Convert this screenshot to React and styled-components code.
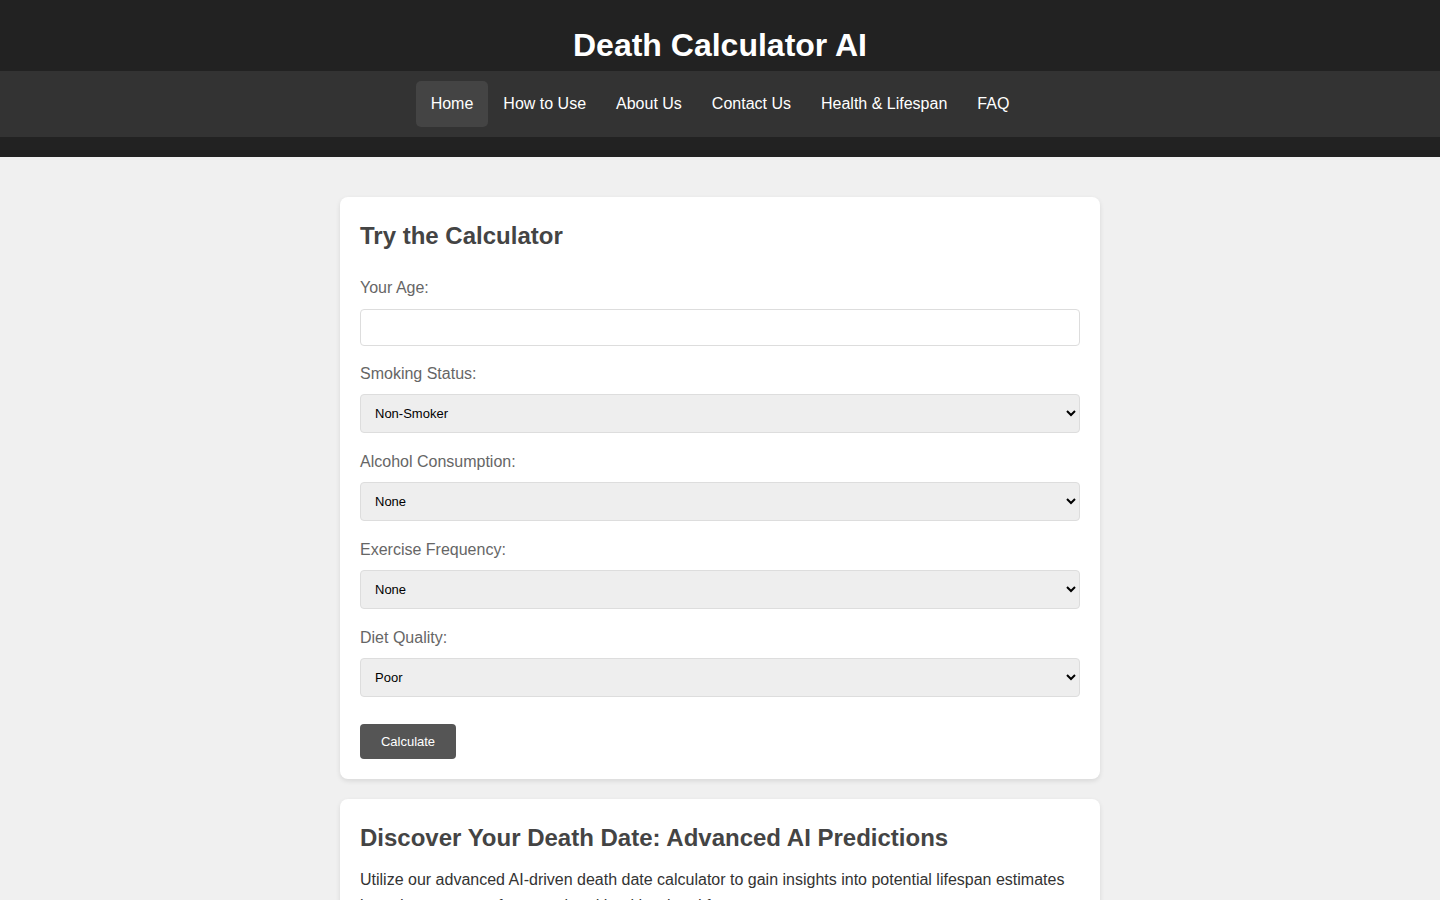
import styled, { createGlobalStyle } from 'styled-components';

const Global = createGlobalStyle`
  body {
    margin: 0;
    background: #f0f0f0;
    font-family: "Liberation Sans", Arial, sans-serif;
    color: #333;
  }
`;

const Header = styled.header`
  background: #222;
  color: #fff;
  text-align: center;
  padding-bottom: 20px;
`;

const Title = styled.h1`
  margin: 0;
  padding: 26px 0 7px;
  font-size: 32px;
  line-height: 38px;
  font-weight: bold;
`;

const Nav = styled.nav`
  background: #333;
  padding: 10px;
  display: flex;
  justify-content: center;
`;

const NavLink = styled.a`
  display: block;
  color: #fff;
  text-decoration: none;
  font-size: 16px;
  line-height: 18px;
  padding: 14px 15px;
  border-radius: 5px;
  background: ${props => (props.active ? '#444' : 'transparent')};
`;

const Main = styled.main`
  width: 760px;
  margin: 40px auto;
  display: flex;
  flex-direction: column;
  gap: 20px;
`;

const Card = styled.section`
  background: #fff;
  border-radius: 8px;
  box-shadow: 0 2px 5px rgba(0, 0, 0, 0.1);
  padding: 20px;
`;

const Heading = styled.h2`
  margin: 5px 0 15px;
  font-size: 24px;
  line-height: 28px;
  color: #444;
`;

const Form = styled.form`
  display: flex;
  flex-direction: column;
  padding-top: 14px;
`;

const Field = styled.div`
  display: flex;
  flex-direction: column;
  margin-bottom: ${props => props.$space || 19}px;
`;

const Label = styled.label`
  font-size: 16px;
  line-height: 18px;
  color: #666;
  margin-bottom: ${props => props.$gap || 12}px;
`;

const Input = styled.input`
  box-sizing: border-box;
  width: 100%;
  height: 37px;
  border: 1px solid #ddd;
  border-radius: 4px;
  padding: 10px;
  margin: 0;
  font-size: 13px;
`;

const Select = styled.select`
  box-sizing: border-box;
  width: 100%;
  height: 39px;
  border: 1px solid #ddd;
  border-radius: 4px;
  background: #eee;
  padding: 0 10px;
  margin: 0;
  font-family: "Liberation Sans", Arial, sans-serif;
  font-size: 13px;
  color: #000;
`;

const Button = styled.button`
  align-self: flex-start;
  margin-top: 7px;
  background: #555;
  color: #fff;
  border: none;
  border-radius: 4px;
  width: 96px;
  height: 35px;
  font-family: "Liberation Sans", Arial, sans-serif;
  font-size: 13px;
`;

const Text = styled.p`
  margin: 0;
  font-size: 16px;
  line-height: 26px;
  color: #333;
`;

const fields = [
  { label: 'Smoking Status:', options: ['Non-Smoker', 'Former Smoker', 'Smoker'] },
  { label: 'Alcohol Consumption:', options: ['None', 'Moderate', 'Heavy'] },
  { label: 'Exercise Frequency:', options: ['None', 'Occasional', 'Regular'] },
  { label: 'Diet Quality:', options: ['Poor', 'Average', 'Good'] },
];

const links = ['Home', 'How to Use', 'About Us', 'Contact Us', 'Health & Lifespan', 'FAQ'];

export default function App() {
  return (
    <>
      <Global />
      <Header>
        <Title>Death Calculator AI</Title>
        <Nav>
          {links.map((l, i) => (
            <NavLink key={l} href="#" active={i === 0 ? 1 : 0}>{l}</NavLink>
          ))}
        </Nav>
      </Header>
      <Main>
        <Card>
          <Heading>Try the Calculator</Heading>
          <Form onSubmit={e => e.preventDefault()}>
            <Field>
              <Label>Your Age:</Label>
              <Input type="number" />
            </Field>
            {fields.map(f => (
              <Field key={f.label} $space={20}>
                <Label $gap={11}>{f.label}</Label>
                <Select defaultValue={f.options[0]}>
                  {f.options.map(o => <option key={o}>{o}</option>)}
                </Select>
              </Field>
            ))}
            <Button type="submit">Calculate</Button>
          </Form>
        </Card>
        <Card>
          <Heading>Discover Your Death Date: Advanced AI Predictions</Heading>
          <Text>
            Utilize our advanced AI-driven death date calculator to gain insights into potential lifespan estimates
            based on a range of personal and health-related factors.
          </Text>
        </Card>
      </Main>
    </>
  );
}
